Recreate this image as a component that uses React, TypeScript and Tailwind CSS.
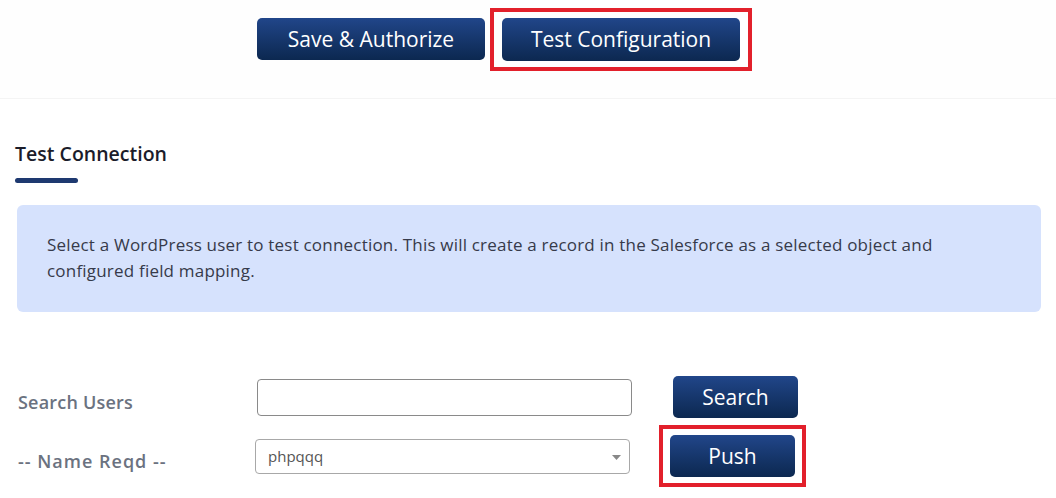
import React from "react";

const btn =
  "flex items-center justify-center rounded-[5px] bg-gradient-to-b from-[#21468a] to-[#0c2850] text-white text-[21px] leading-none";

export default function App() {
  return (
    <div className="w-[1056px] h-[498px] overflow-hidden bg-white font-['Open_Sans',sans-serif]">
      {/* Top action bar */}
      <div className="h-[99px] border-b border-[#f4f4f4] bg-[#fefefe] flex items-start pl-[257px] pt-[8px]">
        <button className={`${btn} w-[228px] h-[42px] mt-[10px]`}>Save &amp; Authorize</button>
        <div className="ml-[5px] border-4 border-[#e2202b] px-[8px] py-[6px]">
          <button className={`${btn} w-[238px] h-[43px]`}>Test Configuration</button>
        </div>
      </div>

      {/* Test Connection */}
      <div className="pl-[15px] pt-[41px]">
        <h2 className="text-[19.5px] leading-[28px] font-semibold text-[#1b1c2a]">Test Connection</h2>
        <div className="mt-[10px] w-[63px] h-[5px] rounded-full bg-[#1e3970]" />
      </div>

      <div className="ml-[17px] mt-[22px] w-[1024px] h-[107px] rounded-[6px] bg-[#d6e2fd] pl-[30px] pt-[27px] pr-[60px]">
        <p className="text-[17px] leading-[26px] tracking-[0.2px] text-[#363a4a]">
          Select a WordPress user to test connection. This will create a record in the Salesforce as a selected object and configured field mapping.
        </p>
      </div>

      {/* Form */}
      <div className="mt-[64px] flex items-center">
        <label className="w-[257px] pl-[18px] pt-[10px] text-[18px] font-semibold tracking-[0.2px] text-[#6b7280]">Search Users</label>
        <input className="w-[375px] h-[37px] rounded-[4px] border border-[#8a8a8a] outline-none px-3" />
        <button className={`${btn} ml-[41px] w-[125px] h-[42px]`}>Search</button>
      </div>

      <div className="mt-[7px] flex items-center">
        <label className="w-[255px] pl-[18px] pt-[10px] text-[18px] font-semibold tracking-[1px] text-[#6b7280]">-- Name Reqd --</label>
        <div className="relative w-[375px] h-[35px] rounded-[4px] border border-[#a8a8a8] flex items-center pl-[12px]">
          <span className="text-[15px] text-[#555]">phpqqq</span>
          <svg className="absolute right-[8px] top-[15px]" width="9" height="5" viewBox="0 0 9 5">
            <path d="M0 0h9L4.5 5z" fill="#888" />
          </svg>
        </div>
        <div className="ml-[29px] border-4 border-[#e2202b] pl-[7px] pr-[7px] py-[6px]">
          <button className={`${btn} w-[125px] h-[42px]`}>Push</button>
        </div>
      </div>
    </div>
  );
}
